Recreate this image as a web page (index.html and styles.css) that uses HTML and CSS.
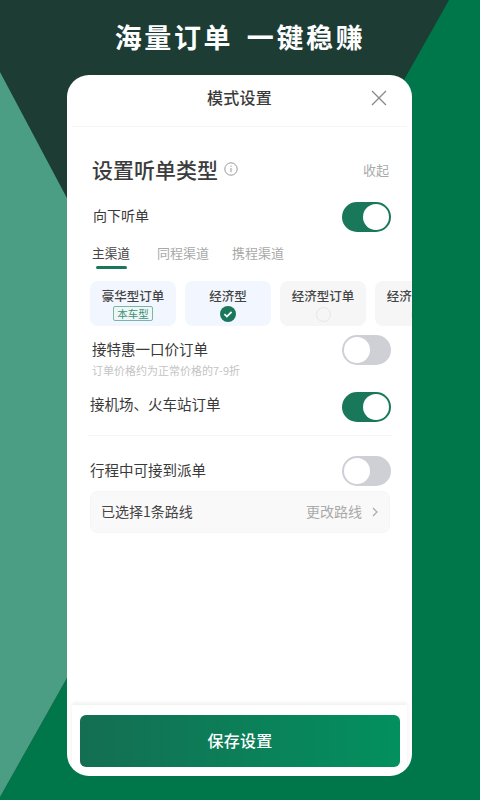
FILE: index.html
```html
<!DOCTYPE html>
<html lang="zh-CN">
<head>
<meta charset="utf-8">
<title>模式设置</title>
<link rel="stylesheet" href="styles.css">
</head>
<body>
<div class="page">
  <svg class="bg" viewBox="0 0 480 800" aria-hidden="true">
    <rect width="480" height="800" fill="#1c3c34"/>
    <polygon points="449,0 480,0 480,800 0,800 0,797" fill="#00774a"/>
    <polygon points="0,72 198,445 0,797" fill="#4b9e84"/>
  </svg>
  <h1 class="headline">海量订单 一键稳赚</h1>
  <main class="card">
    <header class="card-head">
      <span class="card-title">模式设置</span>
      <svg class="close" viewBox="0 0 16 16" aria-hidden="true"><path d="M1 1L15 15M15 1L1 15"/></svg>
    </header>
    <section class="card-body">
      <div class="section-head">
        <h2 class="section-title">设置听单类型</h2>
        <svg class="info" viewBox="0 0 14 14" aria-hidden="true"><circle cx="7" cy="7" r="6.2"/><path d="M7 6v4.2M7 3.6v1.2"/></svg>
        <span class="collapse">收起</span>
      </div>
      <div class="row row-first">
        <span class="label label-up">向下听单</span>
        <span class="toggle on"></span>
      </div>
      <nav class="tabs">
        <span class="tab active">主渠道</span>
        <span class="tab">同程渠道</span>
        <span class="tab">携程渠道</span>
      </nav>
      <div class="chips">
        <div class="chip blue"><span class="chip-name">豪华型订单</span><span class="tag">本车型</span></div>
        <div class="chip blue"><span class="chip-name">经济型</span>
          <svg class="check" viewBox="0 0 16 16" aria-hidden="true"><circle cx="8" cy="8" r="8"/><path d="M4.4 8.2l2.5 2.4 4.7-4.8"/></svg>
        </div>
        <div class="chip grey"><span class="chip-name">经济型订单</span><span class="radio"></span></div>
        <div class="chip grey"><span class="chip-name">经济型订单</span><span class="radio"></span></div>
      </div>
      <div class="row row-deal">
        <div class="deal-text">
          <span class="label label-big">接特惠一口价订单</span>
          <span class="hint">订单价格约为正常价格的7-9折</span>
        </div>
        <span class="toggle"></span>
      </div>
      <div class="row row-station">
        <span class="label label-big label-station">接机场、火车站订单</span>
        <span class="toggle on"></span>
      </div>
      <div class="divider"></div>
      <div class="row row-trip">
        <span class="label label-big label-trip">行程中可接到派单</span>
        <span class="toggle"></span>
      </div>
      <div class="route">
        <span class="route-text">已选择1条路线</span>
        <span class="route-change">更改路线</span>
        <svg class="chevron" viewBox="0 0 6 10" aria-hidden="true"><path d="M1 1l4 4-4 4"/></svg>
      </div>
    </section>
    <footer class="card-foot">
      <button class="save" type="button">保存设置</button>
    </footer>
  </main>
</div>
</body>
</html>
```
FILE: styles.css
```css
* { box-sizing: border-box; }
html, body { margin: 0; padding: 0; }
body { width: 480px; height: 800px; overflow: hidden; font-family: "Noto Sans CJK SC", "Noto Sans", sans-serif; color: #333; }
.page { position: relative; width: 480px; height: 800px; display: flex; flex-direction: column; align-items: center; }
.bg { position: absolute; inset: 0; width: 480px; height: 800px; }
.headline { position: relative; margin: 0; height: 75px; padding-top: 17px; font-size: 27px; line-height: 40px; font-weight: 700; letter-spacing: 2.6px; color: #fff; white-space: pre; word-spacing: 5px; }
.card { position: relative; left: -0.5px; width: 345px; height: 701px; background: #fff; border-radius: 22px; display: flex; flex-direction: column; overflow: hidden; }
.card-head { position: relative; flex: none; height: 52px; border-bottom: 1px solid #f6f6f6; margin: 0 5px; display: flex; align-items: center; justify-content: center; }
.card-title { font-size: 16px; font-weight: 500; color: #3a3a3a; letter-spacing: .2px; margin-top: -7px; }
.close { position: absolute; right: 20px; top: 15px; width: 16px; height: 16px; fill: none; stroke: #888; stroke-width: 1.3; }
.card-body { flex: 1; padding: 0 21px 0 23px; min-height: 0; }
.section-head { display: flex; align-items: center; padding: 24px 0 0 2px; height: 60px; }
.section-title { margin: 0; font-size: 21px; line-height: 30px; font-weight: 500; color: #3c3c3c; }
.info { width: 14px; height: 14px; margin-left: 6px; fill: none; stroke: #999; stroke-width: 1; }
.collapse { margin-left: auto; margin-right: 2px; font-size: 13px; color: #aaa; }
.row { display: flex; align-items: center; justify-content: space-between; }
.row-first { height: 30px; margin-top: 15px; padding-left: 3px; }
.label { font-size: 14px; color: #3a3a3a; line-height: 20px; }
.label-up { margin-top: -4px; }
.label-big { font-size: 14.5px; }
.toggle { position: relative; flex: none; width: 49px; height: 30px; border-radius: 15px; background: #cfd0d5; }
.toggle::after { content: ""; position: absolute; left: 2px; top: 2px; width: 26px; height: 26px; border-radius: 50%; background: #fff; }
.toggle.on { background: #19775a; }
.toggle.on::after { left: 21px; }
.tabs { display: flex; gap: 27px; margin-top: 11px; height: 38px; padding-left: 2px; }
.tab { position: relative; font-size: 13px; line-height: 20px; color: #a8a8a8; }
.tabs .tab:nth-child(3) { margin-left: -4px; }
.tab.active { color: #444; font-size: 12.7px; }
.tab.active::after { content: ""; position: absolute; left: 4px; right: 3px; top: 23px; height: 3px; border-radius: 2px; background: #19775a; }
.chips { display: flex; gap: 9px; width: 330px; overflow: hidden; }
.chip { flex: none; width: 86px; height: 45px; border-radius: 8px; display: flex; flex-direction: column; align-items: center; padding-top: 6px; }
.chip.blue { background: #f2f6fe; }
.chip.grey { background: #f6f6f6; }
.chip-name { font-size: 12.5px; line-height: 17px; font-weight: 500; color: #444; white-space: nowrap; }
.tag { margin-top: 2px; height: 15px; padding: 0 3px; font-size: 10.5px; line-height: 13px; color: #3c907a; background: #eef7f5; border: 1px solid #7ab5a5; border-radius: 2px; }
.check { width: 16px; height: 16px; margin-top: 2px; }
.check circle { fill: #19775a; }
.check path { fill: none; stroke: #fff; stroke-width: 1.8; }
.radio { width: 15px; height: 15px; margin-top: 3px; border: 1px solid #e6e6e6; border-radius: 50%; }
.row-deal { margin-top: 9px; align-items: flex-start; }
.deal-text { display: flex; flex-direction: column; padding: 4px 0 0 2px; }
.hint { font-size: 11px; line-height: 14px; margin-top: 4px; color: #c4c4c4; }
.row-station { height: 30px; margin-top: 15px; }
.label-station { margin-top: -7px; }
.divider { height: 1px; background: #f5f5f5; margin: 13px -1px 0 -2px; }
.row-trip { margin-top: 20px; height: 30px; }
.label-trip { margin-top: -3px; }
.route { display: flex; align-items: center; height: 42px; margin: 5px 1px 0 0; padding: 0 11px 0 10px; background: #f9f9f9; border: 1px solid #f5f5f5; border-radius: 8px; }
.route-text { font-size: 14px; color: #444; margin-top: -2px; }
.route-change { margin-left: auto; font-size: 14px; color: #aaa; margin-top: -2px; }
.chevron { width: 6px; height: 10px; margin-left: 10px; fill: none; stroke: #aaa; stroke-width: 1.2; }
.card-foot { flex: none; height: 71px; margin: 0 5px; padding: 10px 7px 0 8px; box-shadow: 0 -2px 4px rgba(0,0,0,.07); }
.save { display: block; width: 320px; height: 52px; padding: 0 0 2px; border: 0; border-radius: 6px; background: linear-gradient(90deg, #146e52, #03905f); color: #fff; font-family: inherit; font-size: 16px; font-weight: 500; letter-spacing: .2px; }
```
